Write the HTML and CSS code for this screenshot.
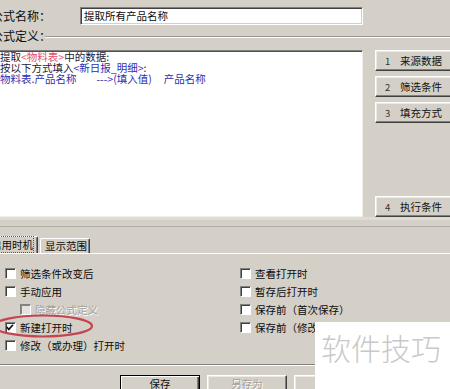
FILE: index.html
```html
<!DOCTYPE html>
<html lang="zh-CN">
<head>
<meta charset="utf-8">
<title>公式定义</title>
<link rel="stylesheet" href="styles.css">
</head>
<body>
<div class="dialog">
  <div class="name-row">
    <span class="lbl">公式名称：</span>
    <div class="input">提取所有产品名称</div>
  </div>
  <div class="def-row">
    <span class="lbl">公式定义：</span>
    <span class="groove"></span>
  </div>
  <div class="main">
    <div class="textarea">
      <div class="line"><span class="dk">提取</span><span class="rd">&lt;物料表&gt;</span><span class="dk">中的数据:</span></div>
      <div class="line"><span class="dk">按以下方式填入</span><span class="bl">&lt;新日报_明细&gt;</span><span class="dk">:</span></div>
      <div class="line bl"><span>物料表.产品名称</span><span class="gap">---&gt;(填入值)</span><span class="gap2">产品名称</span></div>
    </div>
    <div class="side">
      <div class="btn side-btn"><span class="num">1</span>来源数据</div>
      <div class="btn side-btn"><span class="num">2</span>筛选条件</div>
      <div class="btn side-btn"><span class="num">3</span>填充方式</div>
      <div class="btn side-btn last"><span class="num">4</span>执行条件</div>
    </div>
  </div>
  <div class="splitter"></div>
  <div class="tabs">
    <div class="tab active"><span class="focus">启用时机</span></div>
    <div class="tab">显示范围</div>
  </div>
  <div class="panel">
    <div class="col left">
      <div class="chk"><span class="box"></span>筛选条件改变后</div>
      <div class="chk"><span class="box"></span>手动应用</div>
      <div class="chk sub disabled"><span class="box"></span>隐藏公式定义</div>
      <div class="chk"><span class="box"><svg viewBox="0 0 11 11" width="11" height="11"><polyline points="2,5 4.2,7.6 8.8,2.4" fill="none" stroke="#111" stroke-width="1.8"/></svg></span>新建打开时</div>
      <div class="chk"><span class="box"></span>修改（或办理）打开时</div>
    </div>
    <div class="col right">
      <div class="chk"><span class="box"></span>查看打开时</div>
      <div class="chk"><span class="box"></span>暂存后打开时</div>
      <div class="chk"><span class="box"></span>保存前（首次保存）</div>
      <div class="chk"><span class="box"></span>保存前（修改保存）</div>
    </div>
  </div>
  <div class="sep"></div>
  <div class="buttons">
    <div class="btn dbtn default">保存</div>
    <div class="btn dbtn disabled">另存为</div>
    <div class="btn dbtn">取消</div>
  </div>
</div>
<svg class="oval" width="450" height="389" viewBox="0 0 450 389"><ellipse cx="43" cy="326" rx="49" ry="10.5" fill="none" stroke="#c4454f" stroke-width="2.2"/></svg>
<div class="watermark">软件技巧</div>
</body>
</html>
```
FILE: styles.css
```css
body {
  margin: 0;
  width: 450px;
  height: 389px;
  overflow: hidden;
  position: relative;
  background: #d4d0c8;
  color: #0c0c0c;
  font-family: "Noto Sans CJK SC", "Noto Sans", sans-serif;
}

.dialog {
  margin-left: -9px;
  width: 480px;
  padding-top: 7px;
}

.name-row {
  display: flex;
  align-items: center;
  height: 18px;
}

.lbl {
  font-size: 12px;
  line-height: 18px;
  white-space: nowrap;
}

.name-row .lbl {
  width: 89px;
}

.input {
  width: 283px;
  height: 18px;
  box-sizing: border-box;
  background: #fff;
  border: 1px solid;
  border-color: #808080 #fff #fff #808080;
  box-shadow: inset 1px 1px 0 #404040, inset -1px -1px 0 #d4d0c8;
  font-size: 10.5px;
  line-height: 16px;
  padding-left: 3px;
  white-space: nowrap;
}

.def-row {
  display: flex;
  align-items: center;
  height: 21px;
  margin-bottom: 4px;
}

.groove {
  flex: 1;
  height: 0;
  border-top: 1px solid #9a968e;
  border-bottom: 1px solid #fff;
  margin-left: -6px;
  margin-top: 2px;
}

.main {
  display: flex;
  height: 167px;
}

.textarea {
  width: 372px;
  box-sizing: border-box;
  background: #fff;
  border: 1px solid;
  border-color: #808080 #f0efec #f0efec #808080;
  box-shadow: inset 1px 1px 0 #505050;
  padding: 0 0 0 8px;
  font-size: 10.5px;
  white-space: nowrap;
}

.line {
  height: 11px;
  line-height: 11px;
}

.dk { color: #1e1a36; }
.rd { color: #e0506a; }
.bl { color: #2e2eb0; }
.gap { margin-left: 20px; }
.gap2 { margin-left: 12px; }

.side {
  margin-left: 12px;
  width: 90px;
  display: flex;
  flex-direction: column;
  gap: 5px;
}

.btn {
  box-sizing: border-box;
  background: #d4d0c8;
  border: 1px solid;
  border-color: #fff #404040 #404040 #fff;
  box-shadow: inset -1px -1px 0 #808080, inset 1px 1px 0 #ebe9e4;
  font-size: 10.5px;
  color: #111;
  white-space: nowrap;
}

.side-btn {
  height: 21px;
  line-height: 18px;
  padding-left: 9px;
  display: flex;
  align-items: center;
}

.side-btn.last {
  margin-top: auto;
}

.num {
  width: 15px;
  font-size: 9.5px;
  color: #333;
}

.splitter {
  height: 19px;
  background: linear-gradient(to bottom, #dfdcd5 0 3px, transparent 3px 9px, #b3afa7 9px 10px, transparent 10px);
}

.tabs {
  display: flex;
  align-items: flex-end;
  height: 17px;
}

.tab {
  box-sizing: border-box;
  border: 1px solid;
  border-bottom: none;
  border-color: #fff #404040 transparent #fff;
  box-shadow: inset -1px 0 0 #808080;
  border-radius: 2px 2px 0 0;
  font-size: 10.5px;
  line-height: 13px;
  white-space: nowrap;
}

.tab.active {
  height: 17px;
  margin-left: -3px;
  padding: 1px 4px 0 2px;
  position: relative;
  z-index: 1;
}

.focus {
  outline: 1px dotted #555;
  outline-offset: 0;
}

.tab:not(.active) {
  height: 15px;
  width: 50px;
  margin-left: 2px;
  padding: 0 2px 0 4px;
}

.panel {
  height: 111px;
  box-sizing: border-box;
  border-top: 1px solid #fff;
  padding: 10px 0 0 14px;
  display: flex;
}

.col.left {
  width: 235px;
}

.chk {
  height: 18px;
  display: flex;
  align-items: center;
  font-size: 10.5px;
  white-space: nowrap;
}

.box {
  width: 11px;
  height: 11px;
  box-sizing: border-box;
  flex: none;
  margin-right: 4px;
  background: #fff;
  border: 1px solid;
  border-color: #808080 #fff #fff #808080;
  box-shadow: inset 1px 1px 0 #404040;
  display: flex;
}

.box svg {
  margin: -1px 0 0 -1px;
}

.chk.sub {
  margin-left: 15px;
}

.chk.disabled {
  color: #a5a198;
  text-shadow: 1px 1px 0 #fff;
}

.chk.disabled .box {
  background: #e6e3de;
  box-shadow: inset 1px 1px 0 #8a8780;
}

.sep {
  border-top: 1px solid #808080;
  border-bottom: 1px solid #fff;
}

.buttons {
  display: flex;
  gap: 7px;
  margin-top: 9px;
  padding-left: 129px;
}

.dbtn {
  width: 80px;
  height: 23px;
  text-align: center;
  line-height: 16px;
}

.dbtn.default {
  border: 1px solid #000;
  box-shadow: inset 1px 1px 0 #fff, inset -1px -1px 0 #404040, inset -2px -2px 0 #808080;
}

.dbtn.disabled {
  color: #a5a198;
  text-shadow: 1px 1px 0 #fff;
}

.oval {
  position: absolute;
  left: 0;
  top: 0;
  pointer-events: none;
}

.watermark {
  position: absolute;
  left: 315px;
  top: 322px;
  width: 135px;
  height: 67px;
  box-sizing: border-box;
  background: #fff;
  color: #c9c9c9;
  font-size: 30px;
  font-weight: 300;
  line-height: 30px;
  padding: 10px 0 0 6px;
  white-space: nowrap;
}
```
